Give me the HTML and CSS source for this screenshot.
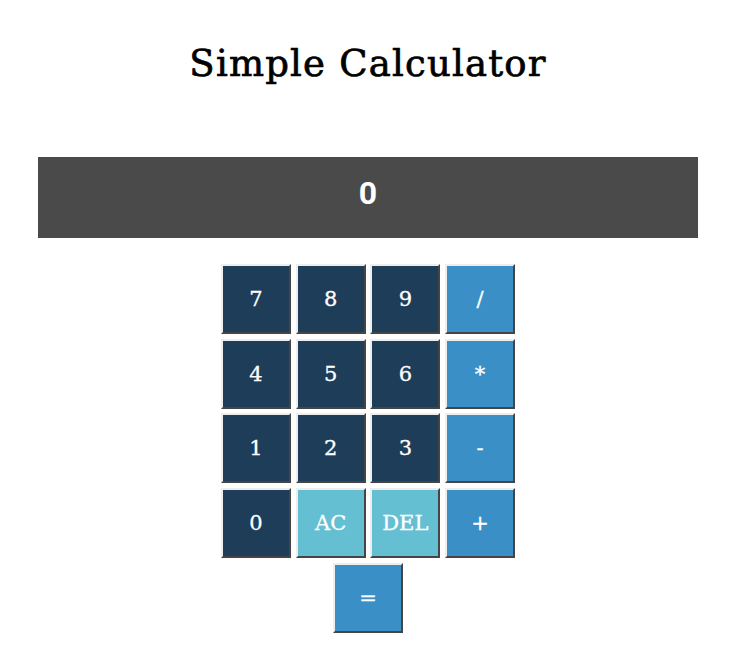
FILE: index.html
```html
<!DOCTYPE html>
<html>
<head>
<meta charset="utf-8">
<link rel="stylesheet" href="styles.css">
</head>
<body>
<h1 class="title">Simple Calculator</h1>
<div class="calc">
  <div class="display">0</div>
  <div class="keys">
    <button class="key num">7</button>
    <button class="key num">8</button>
    <button class="key num">9</button>
    <button class="key op">/</button>
    <button class="key num">4</button>
    <button class="key num">5</button>
    <button class="key num">6</button>
    <button class="key op">*</button>
    <button class="key num">1</button>
    <button class="key num">2</button>
    <button class="key num">3</button>
    <button class="key op">-</button>
    <button class="key num">0</button>
    <button class="key fn">AC</button>
    <button class="key fn">DEL</button>
    <button class="key op">+</button>
    <button class="key op equals">=</button>
  </div>
</div>
</body>
</html>
```
FILE: styles.css
```css
html, body {
  margin: 0;
  padding: 0;
  background: #ffffff;
}
body {
  font-family: "DejaVu Serif", serif;
}
.title {
  margin: 0;
  padding-top: 41px;
  height: 115px;
  box-sizing: border-box;
  text-align: center;
  font-size: 37px;
  font-weight: normal;
  line-height: 46px;
  color: #000;
  padding-right: 7px;
  letter-spacing: 1.2px;
  -webkit-text-stroke: 0.7px #000;
}
.calc {
  padding: 0 45px 0 38px;
}
.display {
  background: #4a4a4a;
  color: #ffffff;
  height: 81px;
  margin-top: 42px;
  display: flex;
  align-items: center;
  justify-content: center;
  font-family: Roboto, "Liberation Sans", sans-serif;
  font-weight: 700;
  font-size: 32px;
  padding-bottom: 9px;
  box-sizing: border-box;
}
.keys {
  margin-top: 26px;
  display: grid;
  grid-template-columns: repeat(4, 70px);
  column-gap: 4.7px;
  row-gap: 4.7px;
  justify-content: center;
}
.key {
  width: 70px;
  height: 70px;
  margin: 0;
  padding: 0;
  border: 2px outset #eeeeee;
  border-top-color: #eeeeee;
  border-left-color: #eeeeee;
  border-right-color: #999999;
  border-bottom-color: #999999;
  color: #ffffff;
  font-family: "DejaVu Serif", serif;
  font-size: 21px;
  -webkit-text-stroke: 0.3px #ffffff;
  box-sizing: border-box;
}
.num { background: #1e3d59; }
.op { background: #3b8fc7; }
.fn { background: #65bfd3; }
.equals {
  grid-column: 1 / -1;
  justify-self: center;
}
```
